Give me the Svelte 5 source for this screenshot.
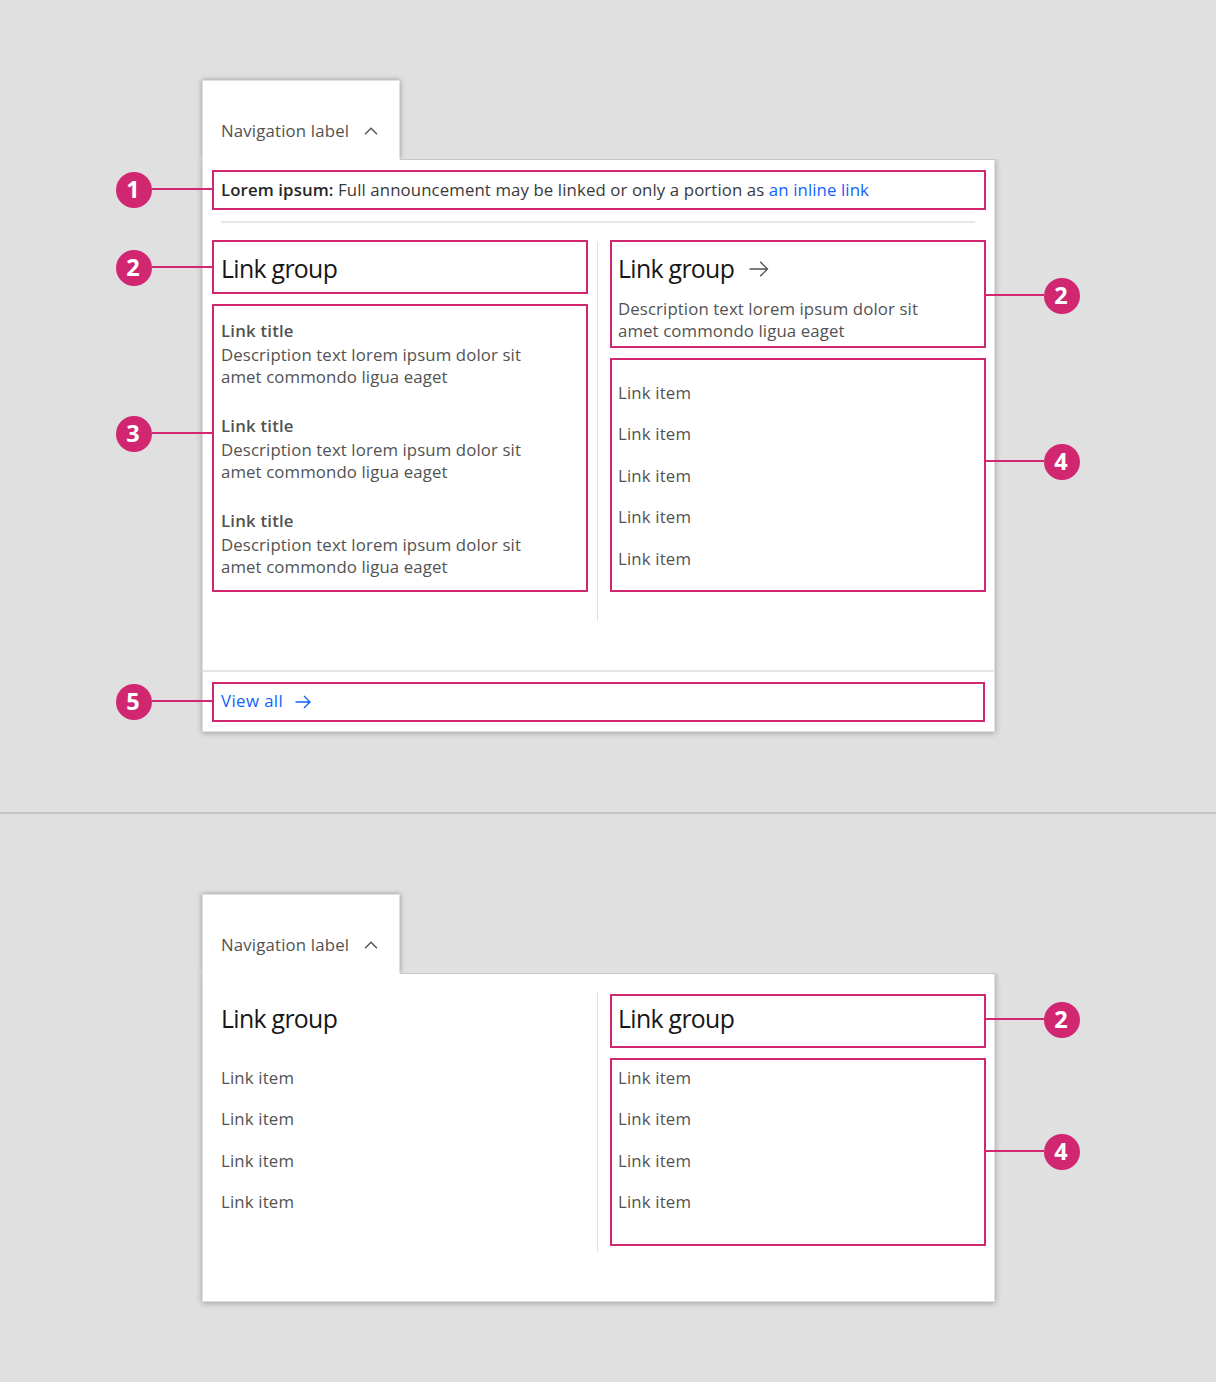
<script>
  const description = ['Description text lorem ipsum dolor sit', 'amet commondo ligua eaget'];
  const titles = [1, 2, 3];
</script>

{#snippet callout(number, side, top)}
  <div class="callout {side}" style:top="{top}px">
    <span class="badge">{number}</span><span class="lead"></span>
  </div>
{/snippet}

{#snippet tab()}
  <div class="tab">
    <span class="label">Navigation label</span>
    <svg class="chevron" width="14" height="8" viewBox="0 0 14 8"><path d="M1 7.2 7 1.2 13 7.2" /></svg>
  </div>
{/snippet}

{#snippet desc()}
  <p class="desc">{description[0]}<br />{description[1]}</p>
{/snippet}

{#snippet items(count)}
  <ul class="items">
    {#each Array(count) as _}<li>Link item</li>{/each}
  </ul>
{/snippet}

<main>
  <section class="board first">
    {@render tab()}
    <div class="panel">
      <div class="frame announcement">
        {@render callout(1, 'left', 0)}
        <p><b>Lorem ipsum:</b> <span class="rest">Full announcement may be linked or only a portion as</span> <a href="#link">an inline link</a></p>
      </div>
      <hr />
      <div class="columns">
        <div class="column">
          <div class="frame heading">
            {@render callout(2, 'left', 8)}
            <h2>Link group</h2>
          </div>
          <div class="frame grow titles">
            {@render callout(3, 'left', 110)}
            {#each titles as _}
              <article>
                <h3>Link title</h3>
                {@render desc()}
              </article>
            {/each}
          </div>
        </div>
        <div class="rule"></div>
        <div class="column second">
          <div class="frame heading tall">
            {@render callout(2, 'right', 36)}
            <h2>Link group
              <svg width="20" height="16" viewBox="0 0 20 16"><path d="M.5 8H18.5M11.2.8 18.5 8 11.2 15.2" /></svg>
            </h2>
            {@render desc()}
          </div>
          <div class="frame grow list">
            {@render callout(4, 'right', 84)}
            {@render items(5)}
          </div>
        </div>
      </div>
      <footer>
        <div class="frame view">
          {@render callout(5, 'left', 0)}
          <a href="#all">View all</a>
          <svg class="blue" width="16" height="14" viewBox="0 0 16 14"><path d="M.5 7H15M9 1 15 7 9 13" /></svg>
        </div>
      </footer>
    </div>
  </section>

  <section class="board">
    {@render tab()}
    <div class="panel short">
      <div class="columns">
        <div class="column">
          <div class="frame bare heading"><h2>Link group</h2></div>
          <div class="frame bare grow list">{@render items(4)}</div>
        </div>
        <div class="rule"></div>
        <div class="column second">
          <div class="frame heading">
            {@render callout(2, 'right', 6)}
            <h2>Link group</h2>
          </div>
          <div class="frame grow list">
            {@render callout(4, 'right', 74)}
            {@render items(4)}
          </div>
        </div>
      </div>
    </div>
  </section>
</main>

<style>
  :global(body) { margin: 0; background: #e0e0e0; }
  * { box-sizing: border-box; }
  main {
    width: 1216px;
    height: 1382px;
    overflow: hidden;
    background: #e0e0e0;
    color: #525252;
    font: 400 16.8px/22px "Open Sans", Roboto, "Liberation Sans", sans-serif;
    letter-spacing: 0.11px;
  }
  h2, h3, p, ul { margin: 0; padding: 0; list-style: none; white-space: nowrap; }
  a { color: #0f62fe; text-decoration: none; }
  svg { flex: none; fill: none; stroke: #525252; stroke-width: 1.35; }
  svg.blue { stroke: #0f62fe; }

  .board { padding: 80px 221px 0 202px; height: 568px; }
  .board.first { height: 814px; border-bottom: 2px solid #c6c6c6; }

  .tab {
    display: flex;
    align-items: center;
    width: 198px;
    height: 79px;
    padding: 22px 0 0 18px;
    background: #fff;
    border: 1px solid #e0e0e0;
    border-bottom: 0;
    box-shadow: 0 0 5px rgba(0, 0, 0, 0.34);
  }
  .tab .label { width: 143px; white-space: nowrap; letter-spacing: 0.17px; }

  .panel {
    position: relative;
    display: flex;
    flex-direction: column;
    width: 793px;
    height: 573px;
    padding: 11px 9px 0;
    background: #fff;
    border: 0 solid #e0e0e0;
    border-width: 0 1px 1px;
  }
  .panel.short { height: 329px; padding-top: 19px; }
  /* Shadow falls on the sides and below only. */
  .panel::before {
    content: "";
    position: absolute;
    inset: 0 -1px -1px;
    box-shadow: 0 1px 6px rgba(0, 0, 0, 0.3);
    clip-path: inset(0 -12px -12px);
    pointer-events: none;
  }
  .panel::after {
    content: "";
    position: absolute;
    top: 0;
    right: -1px;
    left: 197px;
    height: 1px;
    background: #c6c6c6;
  }

  .frame { position: relative; border: 2px solid #d12771; padding-left: 7px; }
  .second .frame { padding-left: 6px; }
  .frame.bare { border-color: transparent; }

  .announcement { width: 774px; height: 40px; padding-top: 7px; color: #393939; }
  .announcement .callout { letter-spacing: 0; }
  .announcement b { font-weight: 600; color: #262626; }

  hr { width: 754px; height: 2px; margin: 11px 0 16px 9px; border: 0; background: #e8e8e8; }

  .columns { display: flex; width: 774px; height: 381px; }
  .column { display: flex; flex-direction: column; gap: 10px; width: 376px; height: 352px; margin-top: 1px; }
  .rule { width: 1px; height: 379px; margin: 3px 12px 0 9px; background: #e0e0e0; }
  .short .columns { height: 260px; }
  .short .column { height: 252px; margin-top: 2px; }
  .short .rule { height: 260px; margin-top: 0; }

  .heading { flex: none; height: 54px; padding-top: 10px; }
  .heading.tall { height: 108px; }
  .short .heading { padding-top: 6px; }
  .grow { flex: 1; min-height: 0; }
  h2 {
    display: flex;
    align-items: center;
    gap: 15px;
    color: #161616;
    font-weight: 400;
    font-size: 24.8px;
    line-height: 32px;
    letter-spacing: -0.66px;
  }
  h2 svg { margin-top: 2px; }
  .tall .desc { margin-top: 14px; }
  .titles { padding-top: 14px; }
  article { height: 94.8px; }
  article:last-child { height: 70px; }
  h3 { font-size: 16.8px; line-height: 22px; font-weight: 600; letter-spacing: 0.2px; }
  article .desc { padding-top: 2px; }
  .list { padding-top: 12px; }
  .items li { height: 41.4px; line-height: 41.4px; letter-spacing: 0.17px; }
  .short .list { padding-top: 0; margin-top: -3px; }
  .short .second .list { margin-top: 0; }
  .short .second .items { margin-top: -3px; }

  footer { margin: 50px -10px 0; padding: 10px 10px 0; border-top: 2px solid #e5e5e5; }
  .view { display: flex; align-items: center; gap: 12px; width: 772.5px; height: 39.5px; }
  .view a { margin-top: -1px; letter-spacing: 0.42px; }

  .callout { position: absolute; z-index: 1; display: flex; align-items: center; height: 36px; }
  .callout.left { right: calc(100% + 2px); }
  .callout.right { left: calc(100% + 2px); flex-direction: row-reverse; }
  .badge {
    width: 36px;
    height: 36px;
    padding-right: 2px;
    border-radius: 50%;
    background: #d12771;
    color: #fff;
    font-size: 23.5px;
    font-weight: 700;
    line-height: 35px;
    letter-spacing: 0;
    text-align: center;
  }
  .lead { width: 60px; height: 2px; margin-top: -2px; background: #d12771; }
  .right .lead { width: 58px; }
</style>
